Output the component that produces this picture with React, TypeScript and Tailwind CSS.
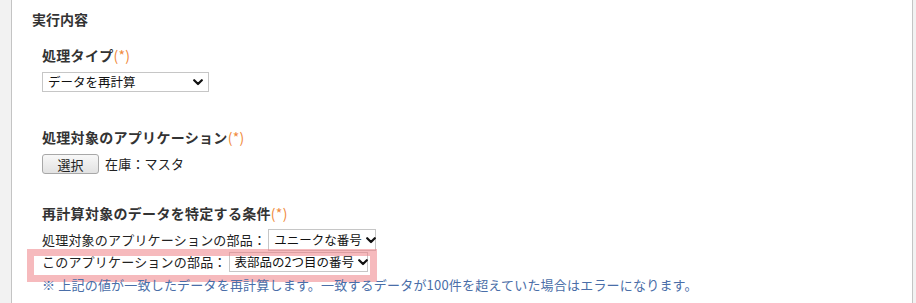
import React from 'react';

const font = { fontFamily: '"Noto Sans CJK JP", "Noto Sans", sans-serif' };

const Chevron = () => (
  <svg width="10" height="7" viewBox="0 0 10 7" className="shrink-0">
    <path d="M1.2 1.2 L5 5 L8.8 1.2" fill="none" stroke="#111" strokeWidth="2.2" strokeLinecap="round" strokeLinejoin="round" />
  </svg>
);

const FakeSelect: React.FC<{ label: string; width: string; height?: string }> = ({ label, width, height = 'h-[20px]' }) => (
  <div className={`flex shrink-0 items-center justify-between gap-1 ${width} ${height} border border-[#c6c6c6] bg-white pl-[5px] pr-[5px] text-[12.5px] text-[#111]`}>
    <span className="whitespace-nowrap leading-none">{label}</span>
    <Chevron />
  </div>
);

const Heading: React.FC<{ children: React.ReactNode }> = ({ children }) => (
  <div className="h-[20px] whitespace-nowrap text-[14px] leading-[20px] font-bold tracking-[0.3px] text-[#333]">
    {children}
    <span className="font-normal text-[#f08a3c]">(*)</span>
  </div>
);

export default function App() {
  return (
    <div className="flex h-[303px] w-[916px] overflow-hidden bg-[#f2f2f2]" style={font}>
      <div className="w-[11px] shrink-0" />
      <div className="relative flex-1 border-x border-[#c4c4c4] bg-white pt-[9px]">
        <div className="pl-[20px] text-[14px] leading-[20px] font-bold text-[#333]">実行内容</div>

        <div className="pl-[30px] pt-[16px]">
          <Heading>処理タイプ</Heading>
          <div className="pt-[7px]">
            <FakeSelect label="データを再計算" width="w-[167px]" />
          </div>
        </div>

        <div className="pl-[30px] pt-[35px]">
          <Heading>処理対象のアプリケーション</Heading>
          <div className="flex items-center gap-[6px] pt-[7px] text-[13px] text-[#222]">
            <button className="h-[20px] w-[57px] rounded-[3px] border border-[#a8a8a8] bg-gradient-to-b from-[#f8f8f8] to-[#e2e2e2] text-[13px] leading-none text-[#222]">
              選択
            </button>
            <span className="tracking-[0.2px]">在庫：マスタ</span>
          </div>
        </div>

        <div className="pl-[30px] pt-[29px]">
          <Heading>再計算対象のデータを特定する条件</Heading>
          <div className="flex items-center gap-[2px] pt-[6px] text-[13px] text-[#222]">
            <span className="whitespace-nowrap tracking-[0.2px]">処理対象のアプリケーションの部品：</span>
            <FakeSelect label="ユニークな番号" width="w-[108px]" height="h-[22px]" />
          </div>
          <div className="flex items-center gap-[2px] pt-px text-[13px] text-[#222]">
            <span className="whitespace-nowrap tracking-[0.2px]">このアプリケーションの部品：</span>
            <FakeSelect label="表部品の2つ目の番号" width="w-[139px]" />
          </div>
          <div className="relative z-10 whitespace-nowrap pt-[3px] text-[13px] leading-[20px] tracking-[0.2px] text-[#4a6ea8]">
            ※ 上記の値が一致したデータを再計算します。一致するデータが100件を超えていた場合はエラーになります。
          </div>
        </div>

        <div className="pointer-events-none absolute left-[15px] top-[249px] h-[33px] w-[350px] border-[7px] border-[rgba(238,130,135,0.55)]" />
      </div>
      <div className="w-[3px] shrink-0" />
    </div>
  );
}
